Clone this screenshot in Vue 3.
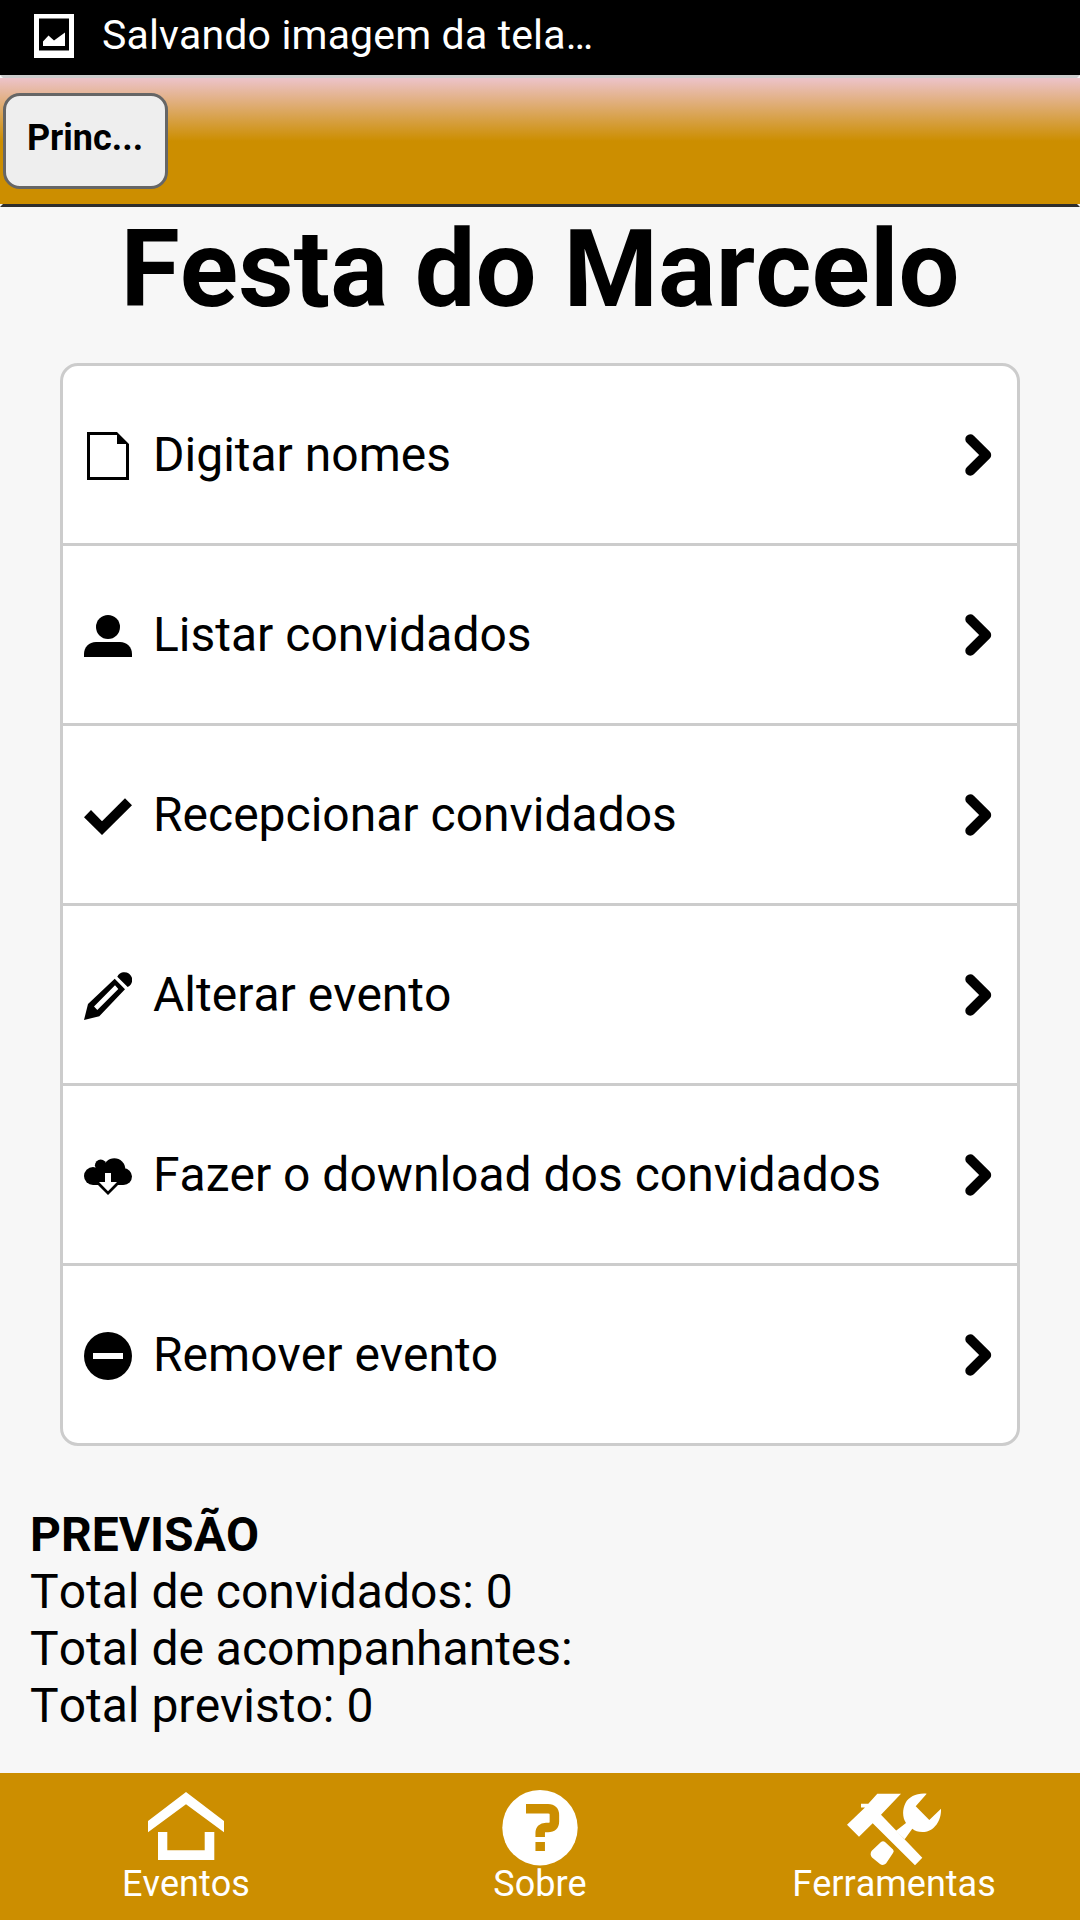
<template>
  <div class="screen">
    <div class="status-bar">
      <svg class="status-icon" viewBox="0 0 40 44">
        <path fill="#fff" fill-rule="evenodd" d="M0 0H40V44H0ZM5 4.5V36.5H35V4.5Z" />
        <path fill="#fff" d="M9 32V27.5L14.5 21.5 20 26.5 31 18.5V32Z" />
      </svg>
      <span class="status-text">Salvando imagem da tela…</span>
    </div>

    <header class="header">
      <button class="back-btn">Princ...</button>
    </header>

    <main class="content">
      <h1 class="title">Festa do Marcelo</h1>

      <ul class="menu">
        <li v-for="item in menu" :key="item.label" class="menu-item">
          <svg class="menu-icon" viewBox="0 0 48 48">
            <path v-if="item.icon === 'page'" fill-rule="evenodd" d="M3 0H33L45 12V48H3ZM6 3V45H42V12H33V3Z" />
            <template v-else-if="item.icon === 'user'">
              <circle cx="24" cy="15" r="12" />
              <path d="M0 45V42C0 35 5 30 12 30H36C43 30 48 35 48 42V45Z" />
            </template>
            <path v-else-if="item.icon === 'check'" d="M41 6.3 48 13.3 18 43 0 25.3 7 18 18 29.3Z" />
            <template v-else-if="item.icon === 'edit'">
              <path
                fill-rule="evenodd"
                d="M0 48 4 32 30.7 6.7 41 17.3 15.3 44.3ZM10 34.6 13.3 38 34.3 17 31 13.3Z"
              />
              <path d="M33.3 4.7A7.8 7.8 0 1 1 43.7 15Z" />
            </template>
            <template v-else-if="item.icon === 'cloud'">
              <circle cx="9" cy="24" r="9" />
              <circle cx="16.7" cy="13.3" r="5.8" />
              <circle cx="30.3" cy="17.3" r="11" />
              <circle cx="39.6" cy="24.6" r="8.4" />
              <path d="M9 17H39V33H34L24 43 14 33H9Z" />
              <path fill="#fff" d="M21 21H27V30H33L24 39.3 15 30H21Z" />
            </template>
            <template v-else>
              <circle cx="24" cy="24" r="24" />
              <path fill="#fff" d="M9 21H39V27H9Z" />
            </template>
          </svg>
          <span class="menu-label">{{ item.label }}</span>
          <svg class="chevron" viewBox="0 0 27 42">
            <path d="M5.3 5.3 21.2 21 5.3 36.7" />
          </svg>
        </li>
      </ul>

      <section class="summary">
        <p class="summary-title">PREVISÃO</p>
        <p v-for="line in summary" :key="line">{{ line }}</p>
      </section>
    </main>

    <footer class="footer">
      <a class="tab">
        <svg class="tab-icon" viewBox="0 0 76 76">
          <path d="M38 2 76 31V42.3L38 14.3 0 42.3V31Z" />
          <path d="M10 42H19.3V60.3H56.7V42H66.3V70H10Z" />
        </svg>
        <span class="tab-label">Eventos</span>
      </a>
      <a class="tab">
        <svg class="tab-icon" viewBox="0 0 76 76">
          <circle cx="38" cy="37.7" r="37.7" />
          <path class="mark" d="M24 18.7H46Q52.4 18.7 52.4 25V31.5Q52.4 37.5 46 37.5H44Q38.2 37.5 38.2 43V47" />
          <path class="mark" d="M38.2 52V61" />
        </svg>
        <span class="tab-label">Sobre</span>
      </a>
      <a class="tab">
        <svg class="tab-icon wide" viewBox="0 0 94 76">
          <path d="M0 34.7 18 17.5 14 17.5V13.7H21.3L30.3 3.7H54L34 24.7 75.3 67.7 68 75.3 25.7 33.3 12 46.7Z" />
          <path
            d="M79.7 3.7 68.7 16.3 82.3 30 94 18.7C94.5 32 86 42 75.5 42 71 42 68 41 65.3 38.7L57.7 49.3 48.7 41 59 33C55.5 28 55 20 58.5 13 62 6.5 70 2.8 79.7 3.7Z"
          />
          <path d="M34 52Q36 50.5 38 52L46 59.5Q47.5 61 46 63L39 73.5Q36 76 33 74L25 67.5Q22.5 64.5 24.5 61Z" />
        </svg>
        <span class="tab-label">Ferramentas</span>
      </a>
    </footer>
  </div>
</template>

<script setup>
const menu = [
  { icon: 'page', label: 'Digitar nomes' },
  { icon: 'user', label: 'Listar convidados' },
  { icon: 'check', label: 'Recepcionar convidados' },
  { icon: 'edit', label: 'Alterar evento' },
  { icon: 'cloud', label: 'Fazer o download dos convidados' },
  { icon: 'minus', label: 'Remover evento' },
]

const summary = ['Total de convidados: 0', 'Total de acompanhantes:', 'Total previsto: 0']
</script>

<style>
body {
  margin: 0;
  background: #f7f7f7;
}
</style>

<style scoped>
.screen {
  display: flex;
  flex-direction: column;
  width: 1080px;
  height: 1920px;
  overflow: hidden;
  background: #f7f7f7;
  color: #000;
  font-family: Roboto, sans-serif;
  font-kerning: none;
}

.status-bar {
  display: flex;
  align-items: center;
  height: 75px;
  box-sizing: border-box;
  padding: 0 34px 3px;
  background: #000;
}

.status-icon {
  width: 40px;
  height: 44px;
}

.status-text {
  margin: 0 0 2px 28px;
  color: #fff;
  font-size: 41px;
  line-height: 48px;
  letter-spacing: 0.15px;
}

/* Header */
.header {
  display: flex;
  align-items: center;
  height: 132px;
  box-sizing: border-box;
  border: 3px solid transparent;
  border-top-color: #ccc;
  border-bottom-color: #2d2d2d;
  background: linear-gradient(#edc3ca 0%, #cc8e00 50%);
}

.back-btn {
  width: 165px;
  height: 96px;
  padding: 0 1px 6px 0;
  border: 3px solid #666;
  border-radius: 17px;
  background: #eee;
  color: #000;
  font-family: inherit;
  font-size: 36px;
  font-weight: 700;
}

/* Content */
.content {
  flex: 1;
}

.title {
  margin: 0 0 32px;
  font-size: 108px;
  font-weight: 700;
  line-height: 124px;
  text-align: center;
  white-space: nowrap;
}

.menu {
  margin: 0 60px;
  padding: 0;
  border: 3px solid #ccc;
  border-radius: 18px;
  background: #fff;
  list-style: none;
}

.menu-item {
  display: flex;
  align-items: center;
  height: 177px;
  padding: 0 25px 0 21px;
}

.menu-item + .menu-item {
  border-top: 3px solid #ccc;
}

.menu-icon {
  width: 48px;
  height: 48px;
  margin-top: 3px;
}

.menu-label {
  flex: 1;
  margin-left: 21px;
  font-size: 48px;
  white-space: nowrap;
}

.chevron {
  width: 27px;
  height: 42px;
  margin-top: 1px;
}

.chevron path {
  fill: none;
  stroke: #000;
  stroke-width: 10;
  stroke-linecap: round;
  stroke-linejoin: round;
}

.summary {
  margin: 60px 30px 0;
  font-size: 48px;
  line-height: 57px;
}

.summary p {
  margin: 0;
}

.summary .summary-title {
  font-weight: 700;
}

/* Footer */
.footer {
  display: flex;
  height: 147px;
  box-sizing: border-box;
  padding: 17px 9px 0;
  background: #cc8e00;
}

.tab {
  flex: 1;
  display: flex;
  flex-direction: column;
  align-items: center;
  color: #fff;
}

.tab-icon {
  width: 76px;
  height: 76px;
  fill: #fff;
}

.tab-icon.wide {
  width: 94px;
}

.mark {
  fill: none;
  stroke: #cc8e00;
  stroke-width: 9.5;
}

.tab-label {
  margin-top: -3px;
  font-size: 36px;
  line-height: 42px;
}
</style>
